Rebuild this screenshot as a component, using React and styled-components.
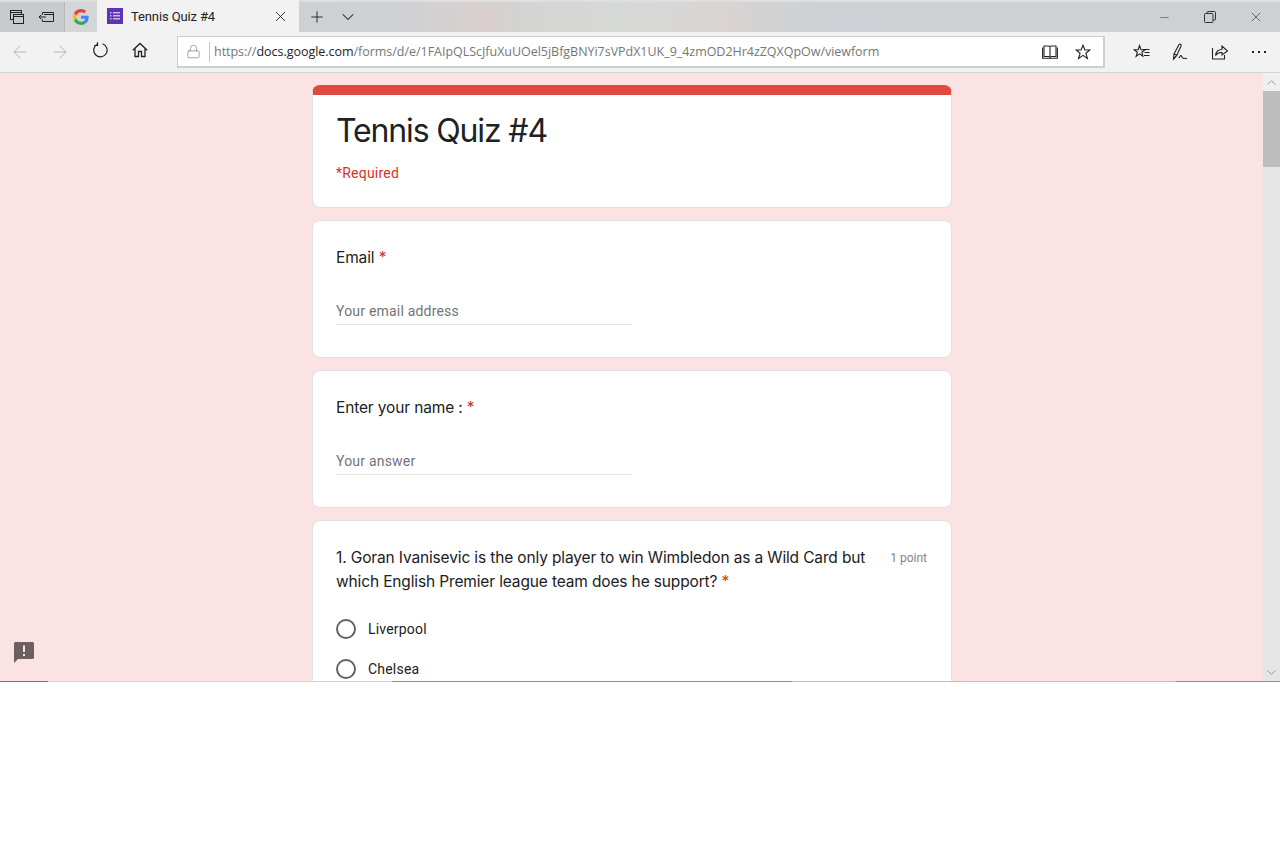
import styled, { createGlobalStyle } from 'styled-components';
import { X, Plus, ChevronDown, ChevronUp, ArrowLeft, ArrowRight, Lock, Minus } from 'lucide-react';

const GlobalStyle = createGlobalStyle`
  html, body {
    margin: 0;
    padding: 0;
    background: #fff;
    font-family: "Roboto", "Liberation Sans", sans-serif;
  }
`;

const BrowserWindow = styled.div`
  width: 1280px;
  height: 682px;
  display: flex;
  flex-direction: column;
  overflow: hidden;
`;

const TitleBar = styled.div`
  height: 32px;
  flex: none;
  display: flex;
  align-items: stretch;
  box-sizing: border-box;
  border-top: 2px solid #dedfe0;
  background: linear-gradient(
    90deg,
    #c9cbcc 0%,
    #cfd1d3 31%,
    #d9d0cf 38%,
    #d4d4d2 41%,
    #d7d9d7 49%,
    #d9d3d1 57%,
    #d2d2d3 60%,
    #cdd0d4 65%,
    #cfd0d2 88%,
    #cfd0d2 100%
  );
`;

const TabTools = styled.div`
  width: 65px;
  display: flex;
  align-items: center;
  justify-content: space-around;
  padding: 0 3px 0 2px;
  box-sizing: border-box;
  background: #c8cacb;
  border-right: 1px solid #b5b7b8;
`;

const PinnedTab = styled.div`
  width: 32px;
  display: flex;
  align-items: center;
  justify-content: center;
  background: #d3d5d6;
`;

const ActiveTab = styled.div`
  width: 202px;
  margin-top: -2px;
  display: flex;
  align-items: center;
  padding: 0 10px 0 10px;
  box-sizing: border-box;
  background: #f2f2f2;
  font-family: "Roboto", sans-serif;
  font-size: 13px;
  letter-spacing: -0.12px;
  color: #222;
`;

const FormsIcon = styled.span`
  width: 16px;
  height: 16px;
  background: #5e35b1;
  margin-right: 8px;
  display: flex;
  align-items: center;
  justify-content: center;
`;

const TabTitle = styled.span`
  flex: 1;
`;

const TabActions = styled.div`
  display: flex;
  align-items: center;
  gap: 12px;
  padding-left: 9px;
  color: #222;
`;

const Spacer = styled.div`
  flex: 1;
`;

const WindowControls = styled.div`
  display: flex;
  align-items: center;
  padding-right: 1px;
  color: #333;
`;

const WindowButton = styled.div`
  width: 46px;
  display: flex;
  justify-content: center;
`;

const Toolbar = styled.div`
  height: 40px;
  flex: none;
  display: flex;
  align-items: center;
  background: #f2f2f2;
  border-bottom: 1px solid #d4d4d4;
  box-sizing: content-box;
`;

const NavButton = styled.div`
  width: 40px;
  display: flex;
  justify-content: center;
  color: ${(p) => (p.$off ? '#a9a9a9' : '#222')};
`;

const NavGroup = styled.div`
  display: flex;
  width: 177px;
`;

const AddressBar = styled.div`
  width: 928px;
  height: 32px;
  box-sizing: border-box;
  display: flex;
  align-items: center;
  background: #fff;
  border: 1px solid #cfcfcf;
  border-width: 1px 2px 2px 1px;
  padding-right: 12px;
`;

const LockBox = styled.div`
  width: 31px;
  height: 20px;
  flex: none;
  display: flex;
  align-items: center;
  justify-content: center;
  color: #8a8a8a;
  border-right: 1px solid #c4c4c4;
`;

const Url = styled.div`
  flex: 1;
  padding-left: 4px;
  font-family: "Open Sans", sans-serif;
  font-size: 12.5px;
  letter-spacing: -0.03px;
  color: #767676;
  white-space: nowrap;
  overflow: hidden;
`;

const UrlHost = styled.span`
  color: #222;
`;

const AddressIcons = styled.div`
  display: flex;
  align-items: center;
  gap: 17px;
  color: #222;
`;

const ToolGroup = styled.div`
  display: flex;
  align-items: center;
  margin-left: 17px;
  color: #222;
`;

const ToolButton = styled.div`
  width: 39px;
  display: flex;
  justify-content: center;
`;

const Viewport = styled.div`
  flex: 1;
  min-height: 0;
  display: flex;
  position: relative;
  background: #fae3e2;
  overflow: hidden;
`;

const BottomEdge = styled.div`
  height: 1px;
  flex: none;
  background: linear-gradient(
    90deg,
    #77736f 0 48px,
    #d6cfcd 48px 392px,
    #8f8d86 392px 792px,
    #c4c0bb 792px 1176px,
    #8f8d8a 1176px 1280px
  );
`;

const Page = styled.main`
  flex: 1;
  display: flex;
  flex-direction: column;
  align-items: center;
  gap: 12px;
  padding: 12px 0 0 1px;
  box-sizing: border-box;
`;

const Card = styled.section`
  width: 640px;
  flex: none;
  box-sizing: border-box;
  background: #fff;
  border: 1px solid #dfe1e5;
  border-radius: 8px;
  padding: 25px 24px 24px 23px;
  color: #202124;
`;

const HeaderCard = styled(Card)`
  height: 123px;
  border-top: 10px solid #e04a3c;
  padding: 18px 24px 0 23px;
`;

const FormTitle = styled.h1`
  margin: 0;
  font-family: "Inter", sans-serif;
  font-weight: 400;
  font-size: 32px;
  line-height: 36px;
  letter-spacing: -1.15px;
  color: #202124;
`;

const RequiredNote = styled.div`
  margin-top: 14px;
  font-size: 14px;
  line-height: 20px;
  letter-spacing: 0.22px;
  color: #d93025;
`;

const FieldCard = styled(Card)`
  height: 138px;
`;

const QuestionRow = styled.div`
  display: flex;
  justify-content: space-between;
  gap: 16px;
`;

const QuestionText = styled.div`
  font-family: "Inter", sans-serif;
  font-size: 15.5px;
  line-height: 24px;
  letter-spacing: -0.14px;
  color: #202124;
`;

const RequiredMark = styled.span`
  color: #d93025;
`;

const Points = styled.div`
  flex: none;
  font-size: 12px;
  line-height: 24px;
  color: #80868b;
`;

const TextInput = styled.div`
  width: 296px;
  margin-top: 31px;
  height: 24px;
  box-sizing: border-box;
  border-bottom: 1px solid #e4e4e4;
  font-size: 14px;
  line-height: 20px;
  letter-spacing: 0.2px;
  color: #70757a;
`;

const QuizCard = styled(Card)`
  padding-bottom: 40px;
`;

const Options = styled.div`
  margin-top: 25px;
  display: flex;
  flex-direction: column;
  gap: 20px;
`;

const Option = styled.label`
  display: flex;
  align-items: center;
  gap: 12px;
  height: 20px;
  font-size: 14px;
  letter-spacing: 0.2px;
  color: #202124;
`;

const Radio = styled.span`
  width: 20px;
  height: 20px;
  box-sizing: border-box;
  border: 2px solid #5f6368;
  border-radius: 50%;
`;

const FeedbackButton = styled.div`
  position: absolute;
  left: 13px;
  bottom: 18px;
  line-height: 0;
`;

const Scrollbar = styled.div`
  width: 17px;
  flex: none;
  display: flex;
  flex-direction: column;
  background: #e6e6e6;
  color: #858585;
`;

const ScrollArrow = styled.div`
  height: 18px;
  flex: none;
  display: flex;
  align-items: center;
  justify-content: center;
  background: ${(p) => (p.$top ? '#f0f0f0' : 'transparent')};
`;

const ScrollThumb = styled.div`
  height: 76px;
  flex: none;
  background: #bdbdbd;
`;

const ScrollTrack = styled.div`
  flex: 1;
`;

const WindowsIcon = () => (
  <svg width="16" height="16" viewBox="0 0 16 16" fill="none" stroke="#222" strokeWidth="1">
    <rect x="1.5" y="1.5" width="11" height="9" />
    <rect x="4.5" y="5.5" width="10" height="9" fill="#c8cacb" />
    <path d="M1.5 3.5h11M4.5 7.5h10" />
  </svg>
);

const TabAsideIcon = () => (
  <svg width="16" height="14" viewBox="0 0 16 14" fill="none" stroke="#222" strokeWidth="1">
    <path d="M4.5 2.5h11v9h-11v-2M4.5 2.5v2M6 4.5h9.5" />
    <path d="M8 7H1M3.5 4.700 1 7l2.500 2.300" />
  </svg>
);

const GoogleIcon = () => (
  <svg width="16" height="16" viewBox="0 0 48 48">
    <path fill="#EA4335" d="M24 9.500c3.500 0 6.700 1.300 9.100 3.500l6.800-6.800C35.800 2.400 30.300 0 24 0 14.600 0 6.500 5.400 2.600 13.200l7.900 6.200C12.400 13.700 17.700 9.500 24 9.500z" />
    <path fill="#4285F4" d="M47 24.500c0-1.600-.1-3.100-.4-4.500H24v9h12.900c-.6 3-2.200 5.500-4.700 7.200l7.600 5.900C44.300 37.900 47 31.800 47 24.500z" />
    <path fill="#FBBC05" d="M10.500 28.600c-.5-1.400-.8-3-.8-4.600s.3-3.200.8-4.600l-7.900-6.200C.9 16.500 0 20.100 0 24s.9 7.500 2.600 10.800l7.900-6.200z" />
    <path fill="#34A853" d="M24 48c6.500 0 11.900-2.100 15.800-5.900l-7.600-5.900c-2.100 1.400-4.900 2.300-8.200 2.300-6.300 0-11.600-4.200-13.500-9.900l-7.900 6.200C6.500 42.600 14.600 48 24 48z" />
  </svg>
);

const FormsGlyph = () => (
  <svg width="10" height="8" viewBox="0 0 10 8" fill="#c9b8ea">
    <path d="M0 0h1.500v1.500H0zM3 0h7v1.500H3zM0 3h1.500v1.500H0zM3 3h7v1.500H3zM0 6h1.500v1.500H0zM3 6h7v1.500H3z" />
  </svg>
);

const RestoreIcon = () => (
  <svg width="12" height="12" viewBox="0 0 12 12" fill="none" stroke="#333" strokeWidth="1">
    <rect x="0.500" y="2.500" width="8.500" height="9" rx="1" />
    <path d="M3 2.500V1.500a1 1 0 0 1 1-1h6.500a1 1 0 0 1 1 1V8a1 1 0 0 1-1 1H9" />
  </svg>
);

const ReloadIcon = () => (
  <svg width="16" height="16" viewBox="0 0 16 16" fill="none" stroke="#222" strokeWidth="1.200">
    <path d="M5.200 2.300A6.700 6.700 0 1 0 10.500 1.800" />
    <path d="M5.500 0.300v3.200H2.300" />
  </svg>
);

const HomeIcon = () => (
  <svg width="16" height="16" viewBox="0 0 16 16" fill="none" stroke="#222" strokeWidth="1.300">
    <path d="M0.800 8.200 8 1.500l7.200 6.700" />
    <path d="M3 6.500v8h3.500V9.500h3v5H13v-8" />
  </svg>
);

const BookIcon = () => (
  <svg width="16" height="16" viewBox="0 0 16 16" fill="none" stroke="#222" strokeWidth="1.100">
    <path d="M2 2h4.500c.8 0 1.500.5 1.500 1.300C8 2.500 8.700 2 9.500 2H14v10.500H9.500c-.8 0-1.500.3-1.500 1-0-.7-.7-1-1.500-1H2z" />
    <path d="M8 3.300v10.200M0.600 3.500v10.800h14.800V3.500" />
  </svg>
);

const StarIcon = () => (
  <svg width="16" height="16" viewBox="0 0 16 16" fill="none" stroke="#222" strokeWidth="1.100" strokeLinejoin="miter">
    <path d="M8 1.300 9.900 6h5l-4 3.200 1.500 5.200L8 11.400l-4.400 3 1.500-5.200-4-3.200h5z" />
  </svg>
);

const FavoritesIcon = () => (
  <svg width="18" height="18" viewBox="0 0 18 18" fill="none" stroke="#222" strokeWidth="1.100">
    <path d="M6.500 2.500 8 6.700h-.1L12 6.800 8.900 9.300l1 4-3.400-2.400-3.400 2.400 1.200-4L1.200 6.800l4-.1z" />
    <path d="M10.500 6.500h6M11.500 9.500h5M11 12.500h5.500" />
  </svg>
);

const PenIcon = () => (
  <svg width="20" height="20" viewBox="0 0 20 20" fill="none" stroke="#222" strokeWidth="1.100">
    <path d="M2.500 17 3 12 8 2.500c.6-1 2.600-.2 2.200 1L6 13z" />
    <path d="M3 12l3 1M2.500 17l3.500-4" />
    <path d="M8 16c1-2.500 2-3 2.500-2s1 3 2.500 2.500 1.500-.5 3 .3" />
  </svg>
);

const ShareIcon = () => (
  <svg width="18" height="18" viewBox="0 0 18 18" fill="none" stroke="#222" strokeWidth="1.100">
    <path d="M1.500 5v11h12v-4" />
    <path d="M4.500 12.500C5 8.500 7.500 6.500 11 6.500V3l5.500 5L11 12V9.500c-2.500-.2-5 .8-6.500 3z" />
  </svg>
);

const DotsIcon = () => (
  <svg width="16" height="4" viewBox="0 0 16 4" fill="#222">
    <path d="M1 1h2v2H1zM7 1h2v2H7zM13 1h2v2h-2z" />
  </svg>
);

const FeedbackIcon = () => (
  <svg width="22" height="22" viewBox="0 0 22 22">
    <path
      fill="#6d5f5f"
      d="M2.500 1h17c.8 0 1.500.7 1.500 1.500v14c0 .8-.7 1.500-1.500 1.500H5l-4 4V2.500C1 1.700 1.700 1 2.500 1z"
    />
    <path fill="#fae3e2" d="M10 4.500h2v6.500h-2zM10 13h2v2h-2z" />
  </svg>
);

const App = () => (
  <>
    <GlobalStyle />
    <BrowserWindow>
      <TitleBar>
        <TabTools>
          <WindowsIcon />
          <TabAsideIcon />
        </TabTools>
        <PinnedTab>
          <GoogleIcon />
        </PinnedTab>
        <ActiveTab>
          <FormsIcon>
            <FormsGlyph />
          </FormsIcon>
          <TabTitle>Tennis Quiz #4</TabTitle>
          <X size={17} strokeWidth={1.25} />
        </ActiveTab>
        <TabActions>
          <Plus size={18} strokeWidth={1.25} />
          <ChevronDown size={20} strokeWidth={1.25} />
        </TabActions>
        <Spacer />
        <WindowControls>
          <WindowButton>
            <Minus size={13} strokeWidth={1} />
          </WindowButton>
          <WindowButton>
            <RestoreIcon />
          </WindowButton>
          <WindowButton>
            <X size={16} strokeWidth={1} />
          </WindowButton>
        </WindowControls>
      </TitleBar>

      <Toolbar>
        <NavGroup>
          <NavButton $off>
            <ArrowLeft size={20} strokeWidth={1} />
          </NavButton>
          <NavButton $off>
            <ArrowRight size={20} strokeWidth={1} />
          </NavButton>
          <NavButton>
            <ReloadIcon />
          </NavButton>
          <NavButton>
            <HomeIcon />
          </NavButton>
        </NavGroup>
        <AddressBar>
          <LockBox>
            <Lock size={15} strokeWidth={1.25} />
          </LockBox>
          <Url>
            https://<UrlHost>docs.google.com</UrlHost>/forms/d/e/1FAIpQLScJfuXuUOel5jBfgBNYi7sVPdX1UK_9_4zmOD2Hr4zZQXQpOw/viewform
          </Url>
          <AddressIcons>
            <BookIcon />
            <StarIcon />
          </AddressIcons>
        </AddressBar>
        <ToolGroup>
          <ToolButton>
            <FavoritesIcon />
          </ToolButton>
          <ToolButton>
            <PenIcon />
          </ToolButton>
          <ToolButton>
            <ShareIcon />
          </ToolButton>
          <ToolButton>
            <DotsIcon />
          </ToolButton>
        </ToolGroup>
      </Toolbar>

      <Viewport>
        <Page>
          <HeaderCard>
            <FormTitle>Tennis Quiz #4</FormTitle>
            <RequiredNote>*Required</RequiredNote>
          </HeaderCard>
          <FieldCard>
            <QuestionText>
              Email <RequiredMark>*</RequiredMark>
            </QuestionText>
            <TextInput>Your email address</TextInput>
          </FieldCard>
          <FieldCard>
            <QuestionText>
              Enter your name : <RequiredMark>*</RequiredMark>
            </QuestionText>
            <TextInput>Your answer</TextInput>
          </FieldCard>
          <QuizCard>
            <QuestionRow>
              <QuestionText>
                1. Goran Ivanisevic is the only player to win Wimbledon as a Wild Card but which English Premier league team does he support? <RequiredMark>*</RequiredMark>
              </QuestionText>
              <Points>1 point</Points>
            </QuestionRow>
            <Options>
              <Option>
                <Radio />
                Liverpool
              </Option>
              <Option>
                <Radio />
                Chelsea
              </Option>
            </Options>
          </QuizCard>
        </Page>
        <FeedbackButton>
          <FeedbackIcon />
        </FeedbackButton>
        <Scrollbar>
          <ScrollArrow $top>
            <ChevronUp size={15} strokeWidth={1.25} />
          </ScrollArrow>
          <ScrollThumb />
          <ScrollTrack />
          <ScrollArrow>
            <ChevronDown size={15} strokeWidth={1.25} />
          </ScrollArrow>
        </Scrollbar>
      </Viewport>
      <BottomEdge />
    </BrowserWindow>
  </>
);

export default App;
